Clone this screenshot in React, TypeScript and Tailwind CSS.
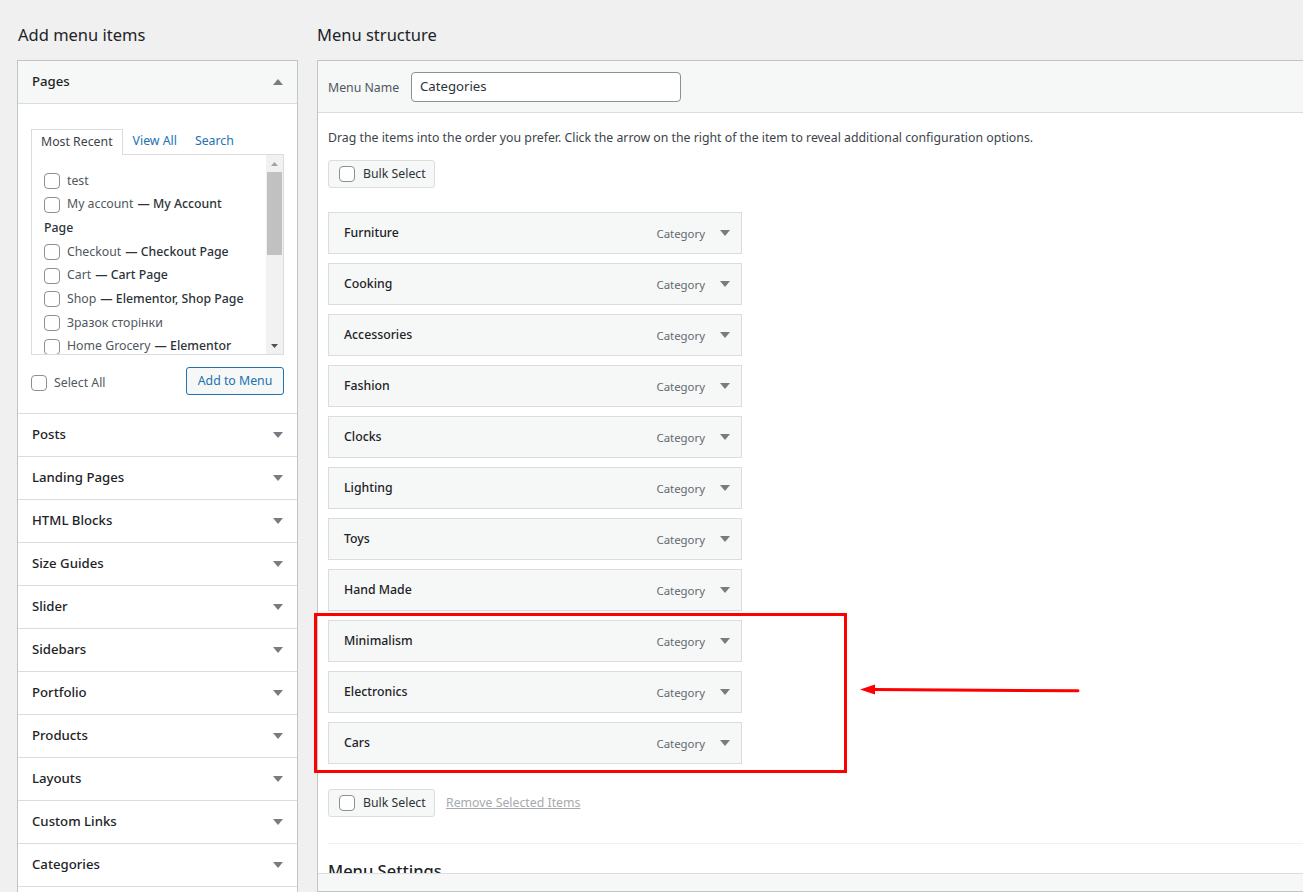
import React from "react";

const sideSections = [
    "Posts",
    "Landing Pages",
    "HTML Blocks",
    "Size Guides",
    "Slider",
    "Sidebars",
    "Portfolio",
    "Products",
    "Layouts",
    "Custom Links",
    "Categories",
];

const menuItems = [
    "Furniture",
    "Cooking",
    "Accessories",
    "Fashion",
    "Clocks",
    "Lighting",
    "Toys",
    "Hand Made",
    "Minimalism",
    "Electronics",
    "Cars",
];

function Caret({ up = false }: { up?: boolean }): JSX.Element {
    return (
        <svg width="10" height="6" viewBox="0 0 10 6" className="fill-[#787c82]">
            {up ? <path d="M0 6h10L5 0z" /> : <path d="M0 0h10L5 6z" />}
        </svg>
    );
}

function Checkbox(): JSX.Element {
    return <span className="inline-block w-4 h-4 shrink-0 rounded-[4px] border border-[#8c8f94] bg-white" />;
}

function BulkSelect(): JSX.Element {
    return (
        <div className="flex items-center gap-2 h-[28px] w-[107px] pl-[10px] rounded-[3px] border border-[#dcdcde] bg-[#f6f7f7] text-[12.3px] text-[#2c3338]">
            <Checkbox />
            <span>Bulk Select</span>
        </div>
    );
}

function PageRow({ name, state }: { name: string; state?: string }): JSX.Element {
    return (
        <li className="flex items-center h-[23.7px] whitespace-nowrap">
            <Checkbox />
            <span className="ml-[7px] text-[#50575e]">{name}</span>
            {state && <span className="ml-[4px] text-[#2c3338] font-medium">— {state}</span>}
        </li>
    );
}

export default function App(): JSX.Element {
    return (
        <div className="relative h-[892px] w-full overflow-hidden bg-[#f0f0f1] font-['Noto_Sans',sans-serif] text-[#1d2327]">
            <div className="flex gap-[19px] pl-[17px]">
                {/* left column */}
                <div className="w-[281px] shrink-0">
                    <h2 className="h-[50px] mt-[10px] flex items-center pl-px text-[16.5px]">Add menu items</h2>
                    <div className="border border-[#c3c4c7] bg-white h-[900px]">
                        <div className="flex items-center justify-between h-[43px] pl-[14px] pr-[14px] bg-[#f6f7f7] border-b border-[#dcdcde]">
                            <span className="text-[13.2px] font-medium">Pages</span>
                            <Caret up />
                        </div>
                        <div className="px-[13px] pt-[24px] pb-[18px] border-b border-[#dcdcde]">
                            <div className="flex items-end text-[12.3px] h-[26px]">
                                <div className="h-[26px] px-[9px] flex items-center border border-b-0 border-[#dcdcde] bg-white text-[#3c434a] relative top-px">
                                    Most Recent
                                </div>
                                <span className="h-[26px] flex items-center ml-[10px] text-[#2271b1]">View All</span>
                                <span className="h-[26px] flex items-center ml-[18px] text-[#2271b1]">Search</span>
                            </div>
                            <div className="flex h-[201px] border border-[#dcdcde] overflow-hidden">
                                <ul className="flex-1 pl-[12px] pt-[14px] text-[12.3px]">
                                    <PageRow name="test" />
                                    <PageRow name="My account" state="My Account" />
                                    <li className="flex items-center h-[23.7px] text-[#2c3338] font-medium">Page</li>
                                    <PageRow name="Checkout" state="Checkout Page" />
                                    <PageRow name="Cart" state="Cart Page" />
                                    <PageRow name="Shop" state="Elementor, Shop Page" />
                                    <PageRow name="Зразок сторінки" />
                                    <PageRow name="Home Grocery" state="Elementor" />
                                </ul>
                                <div className="w-[17px] shrink-0 bg-[#f1f1f1] flex flex-col items-center">
                                    <div className="h-[17px] flex items-center justify-center">
                                        <svg width="7" height="4" viewBox="0 0 7 4" className="fill-[#a3a3a3]"><path d="M0 4h7L3.5 0z" /></svg>
                                    </div>
                                    <div className="w-[15px] h-[83px] bg-[#c1c1c1]" />
                                    <div className="flex-1" />
                                    <div className="h-[17px] flex items-center justify-center">
                                        <svg width="7" height="4" viewBox="0 0 7 4" className="fill-[#505050]"><path d="M0 0h7L3.5 4z" /></svg>
                                    </div>
                                </div>
                            </div>
                            <div className="flex items-center justify-between mt-[12px]">
                                <label className="flex items-center gap-[7px] mt-[4px] text-[12.3px] text-[#50575e]">
                                    <Checkbox />
                                    Select All
                                </label>
                                <button className="h-[28px] w-[98px] rounded-[3px] border border-[#2271b1] bg-[#f6f7f7] text-[12.3px] text-[#2271b1]">
                                    Add to Menu
                                </button>
                            </div>
                        </div>
                        {sideSections.map((s) => (
                            <div key={s} className="flex items-center justify-between h-[43px] pl-[14px] pr-[14px] border-b border-[#dcdcde]">
                                <span className="text-[13.2px] font-medium">{s}</span>
                                <Caret />
                            </div>
                        ))}
                    </div>
                </div>

                {/* right column */}
                <div className="w-[1100px] shrink-0">
                    <h2 className="h-[50px] mt-[10px] flex items-center text-[16.5px]">Menu structure</h2>
                    <div className="flex flex-col h-[832px] border border-r-0 border-[#c3c4c7] bg-white">
                        <div className="flex items-center h-[52px] pl-[10px] bg-[#f6f7f7] border-b border-[#dcdcde]">
                            <span className="w-[83px] mt-[3px] text-[12.3px] text-[#50575e]">Menu Name</span>
                            <div className="h-[30px] w-[270px] flex items-center px-[8px] rounded-[4px] border border-[#8c8f94] bg-white text-[13.2px] text-[#2c3338]">
                                Categories
                            </div>
                        </div>
                        <div className="flex-1 overflow-hidden pl-[10px]">
                            <p className="mt-[16px] text-[12.3px] text-[#3c434a]">
                                Drag the items into the order you prefer. Click the arrow on the right of the item to reveal additional configuration options.
                            </p>
                            <div className="mt-[13px]">
                                <BulkSelect />
                            </div>
                            <ul className="mt-[24px] flex flex-col gap-[9px]">
                                {menuItems.map((m) => (
                                    <li key={m} className="flex items-center h-[42px] w-[414px] pl-[15px] pr-[11px] border border-[#dcdcde] bg-[#f6f7f7]">
                                        <span className="flex-1 text-[12.3px] font-medium text-[#1d2327]">{m}</span>
                                        <span className="text-[11.4px] text-[#646970] mr-[15px]">Category</span>
                                        <Caret />
                                    </li>
                                ))}
                            </ul>
                            <div className="flex items-center mt-[25px]">
                                <BulkSelect />
                                <span className="ml-[11px] text-[12.3px] text-[#a7aaad] underline">Remove Selected Items</span>
                            </div>
                            <div className="mt-[26px] border-t border-[#f0f0f1]" />
                            <h3 className="mt-[15px] text-[16.5px] font-medium">Menu Settings</h3>
                        </div>
                        <div className="h-[18px] shrink-0 bg-[#f6f7f7] border-t border-[#dcdcde]" />
                    </div>
                </div>
            </div>

            {/* annotation */}
            <div className="absolute left-[314px] top-[613px] w-[533px] h-[160px] border-[3px] border-[#ff0000]" />
            <svg className="absolute left-[855px] top-[678px]" width="230" height="20" viewBox="0 0 230 20">
                <path d="M18 11.5 L223 12.8" stroke="#ff0000" strokeWidth="3" strokeLinecap="round" fill="none" />
                <path d="M5 11.5 L20 6.5 L20 16.5 Z" fill="#ff0000" />
            </svg>
        </div>
    );
}
